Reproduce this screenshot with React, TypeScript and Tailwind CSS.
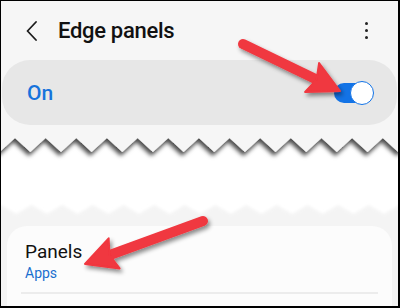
import React from "react";

const P = 30.65;
const X0 = 14;

function zig(yPeak: number, yValley: number, x0: number = X0) {
  const pts: string[] = [];
  for (let k = -1; k < 15; k++) {
    const xp = x0 + k * P;
    pts.push(`${xp.toFixed(1)},${yPeak}`);
    pts.push(`${(xp + P / 2).toFixed(1)},${yValley}`);
  }
  return pts.join(" ");
}

function Arrow({ x1, y1, x2, y2 }: { x1: number; y1: number; x2: number; y2: number }) {
  const dx = x2 - x1;
  const dy = y2 - y1;
  const len = Math.hypot(dx, dy);
  const ux = dx / len;
  const uy = dy / len;
  const hl = 31;
  const hw = 16;
  const bx = x2 - ux * hl;
  const by = y2 - uy * hl;
  const px = -uy;
  const py = ux;
  const head = `${x2},${y2} ${bx + px * hw},${by + py * hw} ${bx + ux * 5},${by + uy * 5} ${bx - px * hw},${by - py * hw}`;
  return (
    <g filter="url(#ashadow)">
      <line x1={x1} y1={y1} x2={bx + ux * 6} y2={by + uy * 6} stroke="#f0373f" strokeWidth={10} strokeLinecap="round" />
      <polygon points={head} fill="#f0373f" strokeLinejoin="round" stroke="#f0373f" strokeWidth={2} />
    </g>
  );
}

export default function App() {
  return (
    <div
      className="relative w-[400px] h-[308px] overflow-hidden border-t border-l border-r-2 border-b-2 border-black bg-[#f6f6f6] flex flex-col"
      style={{ fontFamily: "Roboto, 'Noto Sans', sans-serif" }}
    >
      {/* Header */}
      <div className="h-[59px] shrink-0 flex items-center">
        <svg width="12" height="20" viewBox="0 0 12 20" className="ml-[25px] mt-[1px]">
          <path d="M10 1 L1.5 10 L10 19" fill="none" stroke="#1c1c1c" strokeWidth="1.8" strokeLinecap="round" strokeLinejoin="round" />
        </svg>
        <span className="ml-[20px] text-[22px] font-medium text-[#111] tracking-[-0.3px] leading-none">Edge panels</span>
        <div className="ml-auto mr-[30px] flex flex-col gap-[4px]">
          <span className="w-[3px] h-[3px] rounded-full bg-[#222]" />
          <span className="w-[3px] h-[3px] rounded-full bg-[#222]" />
          <span className="w-[3px] h-[3px] rounded-full bg-[#222]" />
        </div>
      </div>

      {/* On card */}
      <div className="h-[65px] shrink-0 ml-[1px] mr-[1px] rounded-[28px] bg-[#e7e7e7] flex items-center">
        <span className="ml-[25px] text-[21px] font-medium text-[#1673dc] leading-none mt-[1px]">On</span>
        <div className="ml-auto mr-[23px] relative w-[40px] h-[24px] flex items-center">
          <div className="absolute left-[0px] top-[2px] w-[34px] h-[20px] rounded-full bg-[#1373e6]" />
          <div className="absolute right-[0px] top-0 w-[24px] h-[24px] rounded-full bg-white border-[1.5px] border-[#1373e6]" />
        </div>
      </div>

      {/* Torn section */}
      <svg width="397" height="101" viewBox="0 0 397 101" className="shrink-0 block">
        <defs>
          <filter id="zshadow" x="-5%" y="-20%" width="110%" height="160%">
            <feDropShadow dx="-1.5" dy="4" stdDeviation="2" floodColor="#000" floodOpacity="0.7" />
          </filter>
          <filter id="soft" x="-5%" y="-50%" width="110%" height="200%">
            <feGaussianBlur stdDeviation="1.5" />
          </filter>
        </defs>
        <rect x="0" y="0" width="397" height="101" fill="#ffffff" />
        <polygon
          points={`440,120 -40,120 ${zig(80, 89, 0)}`}
          fill="#f4f4f4"
          filter="url(#soft)"
        />
        <rect x="0" y="92" width="397" height="9" fill="#f4f4f4" />
        <polygon points={`-40,0 ${zig(13, 27)} 440,0`} fill="#f6f6f6" filter="url(#zshadow)" />
      </svg>

      {/* Bottom area */}
      <div className="flex-1 bg-[#f4f4f4] px-[6px]">
        <div className="h-full rounded-t-[20px] bg-[#fcfcfc] flex flex-col">
          <div className="pl-[18px] pt-[16px] flex flex-col">
            <span className="text-[19px] text-[#111] leading-none">Panels</span>
            <span className="mt-[5px] text-[14px] text-[#1a6fcf] leading-none">Apps</span>
          </div>
          <div className="mt-auto mb-[12px] mx-[14px] h-[2px] bg-[#ececec]" />
        </div>
      </div>

      {/* Arrows overlay */}
      <svg className="absolute inset-0 pointer-events-none" width="397" height="305" viewBox="1 1 397 305">
        <defs>
          <filter id="ashadow" x="-20%" y="-30%" width="140%" height="160%">
            <feDropShadow dx="2" dy="3" stdDeviation="2" floodColor="#000" floodOpacity="0.45" />
          </filter>
        </defs>
        <Arrow x1={243} y1={44} x2={340} y2={91} />
        <Arrow x1={203} y1={221} x2={85} y2={264} />
      </svg>
    </div>
  );
}
